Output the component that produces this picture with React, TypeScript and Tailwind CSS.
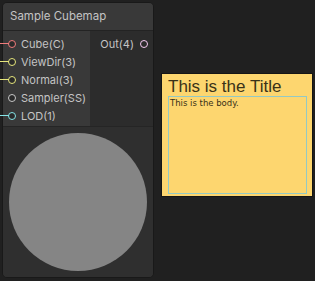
import React from 'react';

type Port = { label: string; color: string; wired: boolean };

const inputs: Port[] = [
  { label: 'Cube(C)', color: '#f07b7b', wired: true },
  { label: 'ViewDir(3)', color: '#e6e67c', wired: true },
  { label: 'Normal(3)', color: '#e6e67c', wired: true },
  { label: 'Sampler(SS)', color: '#c8c8c8', wired: false },
  { label: 'LOD(1)', color: '#84e4e7', wired: true },
];

function Dot({ color }: { color: string }) {
  return (
    <span
      className="w-[8px] h-[8px] rounded-full border-[1.5px] bg-[#2a2a2a] shrink-0"
      style={{ borderColor: color }}
    />
  );
}

export default function App() {
  return (
    <div
      className="relative w-[315px] h-[281px] bg-[#202020] overflow-hidden"
      style={{ fontFamily: 'Inter, "Noto Sans", sans-serif' }}
    >
      {/* node */}
      <div className="absolute left-[2px] top-[2px] w-[152px] h-[276px] rounded-[5px] border border-[#191919] bg-[#2e2e2e] flex flex-col overflow-hidden">
        <div className="h-[28px] bg-[#393939] border-b border-[#232323] flex items-center pl-[7px] text-[11.5px] text-[#c4c4c4]">
          Sample Cubemap
        </div>
        <div className="flex h-[96px] border-b border-[#252525]">
          <div className="w-[87px] bg-[#393939] flex flex-col pt-[4px]">
            {inputs.map((p) => (
              <div key={p.label} className="h-[18px] flex items-center pl-[5px] gap-[5px] text-[11px] text-[#c4c4c4]">
                <Dot color={p.color} />
                <span>{p.label}</span>
              </div>
            ))}
          </div>
          <div className="flex-1 bg-[#2c2c2c] flex justify-end pt-[4px] pr-[5px]">
            <div className="h-[18px] flex items-center gap-[6px] text-[11px] text-[#c4c4c4]">
              <span>Out(4)</span>
              <Dot color="#f4c8ef" />
            </div>
          </div>
        </div>
        <div className="flex-1 bg-[#2f2f2f] flex items-center justify-center">
          <div className="w-[138px] h-[138px] rounded-full bg-[#858585]" />
        </div>
      </div>

      {/* wires into the ports */}
      {[43, 61, 79, 115].map((y, i) => (
        <div
          key={y}
          className="absolute left-0 w-[9px] h-[1px]"
          style={{ top: y, background: ['#f07b7b', '#e6e67c', '#e6e67c', '#84e4e7'][i] }}
        />
      ))}

      {/* sticky note */}
      <div className="absolute left-[161px] top-[73px] w-[152px] h-[124px] border border-[#151515] bg-[#fdd66f] flex flex-col pl-[6px] pr-[5px] pb-[2px] pt-[4px]">
        <div className="text-[17px] leading-[18px] text-[#3a3218] font-['Liberation_Sans',Arial,sans-serif]">
          This is the Title
        </div>
        <div className="flex-1 border border-[#94c9c3] px-[1px] text-[8.5px] leading-[12px] text-[#3a3218] font-['DejaVu_Sans',Verdana,sans-serif]">
          This is the body.
        </div>
      </div>
    </div>
  );
}
